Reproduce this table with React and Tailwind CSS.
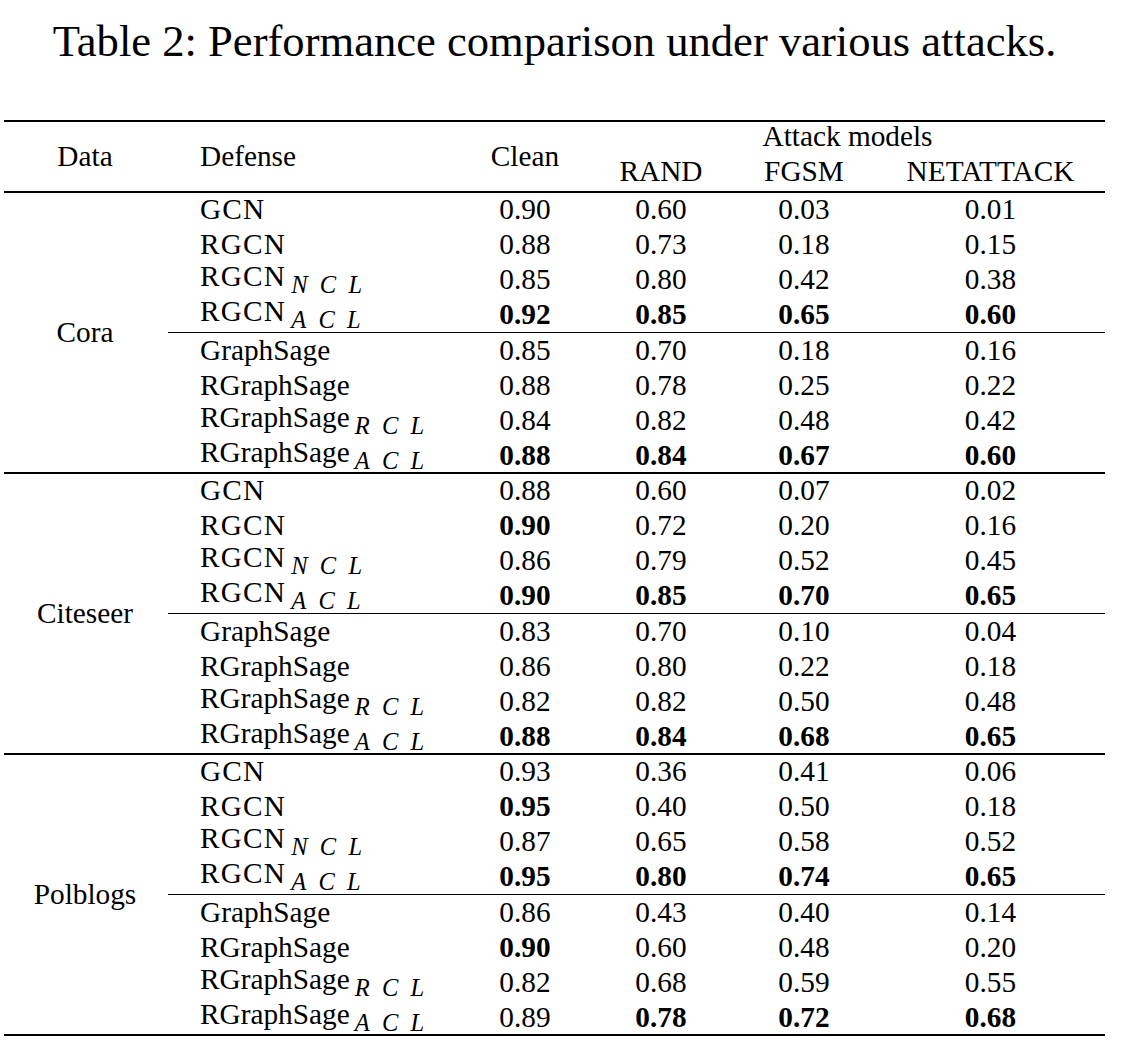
const GROUPS = [
  {
    name: 'Cora',
    rows: [
      ['GCN', '', '0.90', '0.60', '0.03', '0.01'],
      ['RGCN', '', '0.88', '0.73', '0.18', '0.15'],
      ['RGCN', 'NCL', '0.85', '0.80', '0.42', '0.38'],
      ['RGCN', 'ACL', '*0.92', '*0.85', '*0.65', '*0.60'],
      ['GraphSage', '', '0.85', '0.70', '0.18', '0.16'],
      ['RGraphSage', '', '0.88', '0.78', '0.25', '0.22'],
      ['RGraphSage', 'RCL', '0.84', '0.82', '0.48', '0.42'],
      ['RGraphSage', 'ACL', '*0.88', '*0.84', '*0.67', '*0.60'],
    ],
  },
  {
    name: 'Citeseer',
    rows: [
      ['GCN', '', '0.88', '0.60', '0.07', '0.02'],
      ['RGCN', '', '*0.90', '0.72', '0.20', '0.16'],
      ['RGCN', 'NCL', '0.86', '0.79', '0.52', '0.45'],
      ['RGCN', 'ACL', '*0.90', '*0.85', '*0.70', '*0.65'],
      ['GraphSage', '', '0.83', '0.70', '0.10', '0.04'],
      ['RGraphSage', '', '0.86', '0.80', '0.22', '0.18'],
      ['RGraphSage', 'RCL', '0.82', '0.82', '0.50', '0.48'],
      ['RGraphSage', 'ACL', '*0.88', '*0.84', '*0.68', '*0.65'],
    ],
  },
  {
    name: 'Polblogs',
    rows: [
      ['GCN', '', '0.93', '0.36', '0.41', '0.06'],
      ['RGCN', '', '*0.95', '0.40', '0.50', '0.18'],
      ['RGCN', 'NCL', '0.87', '0.65', '0.58', '0.52'],
      ['RGCN', 'ACL', '*0.95', '*0.80', '*0.74', '*0.65'],
      ['GraphSage', '', '0.86', '0.43', '0.40', '0.14'],
      ['RGraphSage', '', '*0.90', '0.60', '0.48', '0.20'],
      ['RGraphSage', 'RCL', '0.82', '0.68', '0.59', '0.55'],
      ['RGraphSage', 'ACL', '0.89', '*0.78', '*0.72', '*0.68'],
    ],
  },
];

// column widths after the Data column (Defense, Clean, RAND, FGSM, NETATTACK)
const COLS = 'grid grid-cols-[292px_130px_142px_144px_229px]';

function Num({ v }) {
  const bold = v.startsWith('*');
  return (
    <div className={`text-center ${bold ? 'font-bold' : ''}`}>{bold ? v.slice(1) : v}</div>
  );
}

function Row({ row }) {
  const [base, sub, ...nums] = row;
  const caps = base === 'GCN' || base === 'RGCN';
  return (
    <div className={`${COLS} h-[34.75px] items-center`}>
      <div className="pl-[32px] whitespace-nowrap">
        <span className={caps ? 'tracking-[1.2px]' : ''}>{base}</span>
        {sub && (
          <span className="italic text-[24.5px] tracking-[0.5em] ml-[5px] align-[-7px]">{sub}</span>
        )}
      </div>
      {nums.map((v, i) => (
        <Num key={i} v={v} />
      ))}
    </div>
  );
}

function Group({ group }) {
  return (
    <div className="grid grid-cols-[164px_937px]">
      <div className="flex items-center justify-center pr-[2px]">{group.name}</div>
      <div className="flex flex-col">
        {group.rows.slice(0, 4).map((r, i) => (
          <Row key={i} row={r} />
        ))}
        <div className="h-[1.5px] bg-black" />
        {group.rows.slice(4).map((r, i) => (
          <Row key={i} row={r} />
        ))}
      </div>
    </div>
  );
}

export default function App() {
  return (
    <div className="w-[1121px] h-[1044px] bg-white text-black overflow-hidden font-['Liberation_Serif','Times_New_Roman','DejaVu_Serif',serif]">
      <div className="ml-[4px] w-[1101px]">
        <div className="h-[83px] flex items-center justify-center text-[44.6px] whitespace-nowrap">
          Table 2: Performance comparison under various attacks.
        </div>

        <div className="mt-[37px] text-[29.3px] leading-none">
          <div className="h-[2px] bg-black" />

          {/* header */}
          <div className="grid grid-cols-[164px_937px] h-[69.25px]">
            <div className="flex items-center justify-center pr-[2px]">Data</div>
            <div className={`${COLS}`}>
              <div className="pl-[32px] flex items-center">Defense</div>
              <div className="flex items-center justify-center">Clean</div>
              <div className="col-span-3 flex flex-col">
                <div className="h-[30px] flex items-center justify-center">Attack models</div>
                <div className="flex-1 grid grid-cols-[142px_144px_229px] items-center">
                  <div className="text-center">RAND</div>
                  <div className="text-center">FGSM</div>
                  <div className="text-center">NETATTACK</div>
                </div>
              </div>
            </div>
          </div>

          <div className="h-[1.5px] bg-black" />

          {GROUPS.map((g, i) => (
            <div key={g.name}>
              <Group group={g} />
              <div className={i === GROUPS.length - 1 ? 'h-[2px] bg-black' : 'h-[1.5px] bg-black'} />
            </div>
          ))}
        </div>
      </div>
    </div>
  );
}
